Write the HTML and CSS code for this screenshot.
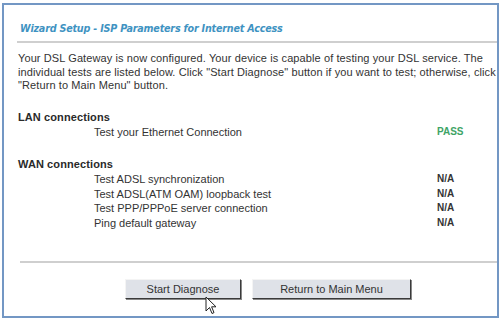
FILE: index.html
```html
<!DOCTYPE html>
<html>
<head>
<meta charset="utf-8">
<link rel="stylesheet" href="styles.css">
</head>
<body>
<div class="frame">
  <h1 class="title">Wizard Setup - ISP Parameters for Internet Access</h1>
  <div class="rule"></div>
  <p class="intro">Your DSL Gateway is now configured. Your device is capable of testing your DSL service. The individual tests are listed below. Click "Start Diagnose" button if you want to test; otherwise, click "Return to Main Menu" button.</p>

  <div class="section lan">
    <div class="sec-title">LAN connections</div>
    <div class="row"><span class="label">Test your Ethernet Connection</span><span class="status pass">PASS</span></div>
  </div>

  <div class="section wan">
    <div class="sec-title">WAN connections</div>
    <div class="row"><span class="label">Test ADSL synchronization</span><span class="status">N/A</span></div>
    <div class="row"><span class="label">Test ADSL(ATM OAM) loopback test</span><span class="status">N/A</span></div>
    <div class="row"><span class="label">Test PPP/PPPoE server connection</span><span class="status">N/A</span></div>
    <div class="row"><span class="label">Ping default gateway</span><span class="status">N/A</span></div>
  </div>

  <div class="rule bottom"></div>
  <div class="buttons">
    <div class="btn-wrap">
      <button class="btn start">Start Diagnose</button>
      <svg class="cursor" width="12" height="19" viewBox="0 0 12 19"><path d="M1 1 L1 15 L4.5 11.5 L7 17.5 L9 16.6 L6.6 10.8 L11 10.8 Z" fill="#fff" stroke="#222" stroke-width="1" stroke-linejoin="round"/></svg>
    </div>
    <button class="btn ret">Return to Main Menu</button>
  </div>
</div>
</body>
</html>
```
FILE: styles.css
```css
html, body {
  margin: 0;
  padding: 0;
  background: #ffffff;
}
body {
  width: 500px;
  height: 320px;
  overflow: hidden;
  font-family: "Liberation Sans", Arial, sans-serif;
  color: #333;
}
.frame {
  box-sizing: border-box;
  margin: 3px 1px 0 2px;
  height: 315px;
  border: 2px solid #7397c4;
  padding: 0 0 0 13px;
  display: flex;
  flex-direction: column;
}
.title {
  margin: 17px 0 0 3px;
  font-family: "DejaVu Sans", Verdana, sans-serif;
  font-size: 9.6px;
  font-weight: bold;
  font-style: italic;
  color: #3f93c2;
  letter-spacing: -0.2px;
  line-height: 14px;
}
.rule {
  height: 2px;
  background: #cfcfcf;
  margin-top: 5px;
}
.intro {
  margin: 9px 0 0 1px;
  font-size: 11px;
  line-height: 13.5px;
  letter-spacing: 0.1px;
}
.section.lan {
  margin-top: 16px;
}
.section.wan {
  margin-top: 17px;
}
.sec-title {
  font-size: 11px;
  font-weight: bold;
  color: #2a2a2a;
  margin-left: 1px;
  line-height: 16px;
  letter-spacing: 0.1px;
}
.row {
  display: flex;
  font-size: 11px;
  line-height: 14.6px;
}
.label {
  margin-left: 77px;
  flex: 1;
}
.status {
  width: 60px;
  font-weight: bold;
  font-size: 10px;
  color: #333;
}
.status.pass {
  color: #3ea466;
}
.rule.bottom {
  margin-top: 31px;
  margin-left: 3px;
}
.buttons {
  display: flex;
  gap: 11px;
  margin-left: 108px;
  margin-top: 16px;
}
.btn-wrap {
  position: relative;
}
.btn {
  font-family: "Liberation Sans", Arial, sans-serif;
  font-size: 11px;
  color: #333;
  background: #dfe2e8;
  border: 1px solid;
  border-color: #f4f4f4 #3a3a3a #3a3a3a #f4f4f4;
  box-shadow: 1px 1px 0 #888;
  height: 20px;
  padding: 0;
}
.btn.start {
  width: 116px;
}
.btn.ret {
  width: 159px;
}
.cursor {
  position: absolute;
  left: 80px;
  top: 17px;
}
```
